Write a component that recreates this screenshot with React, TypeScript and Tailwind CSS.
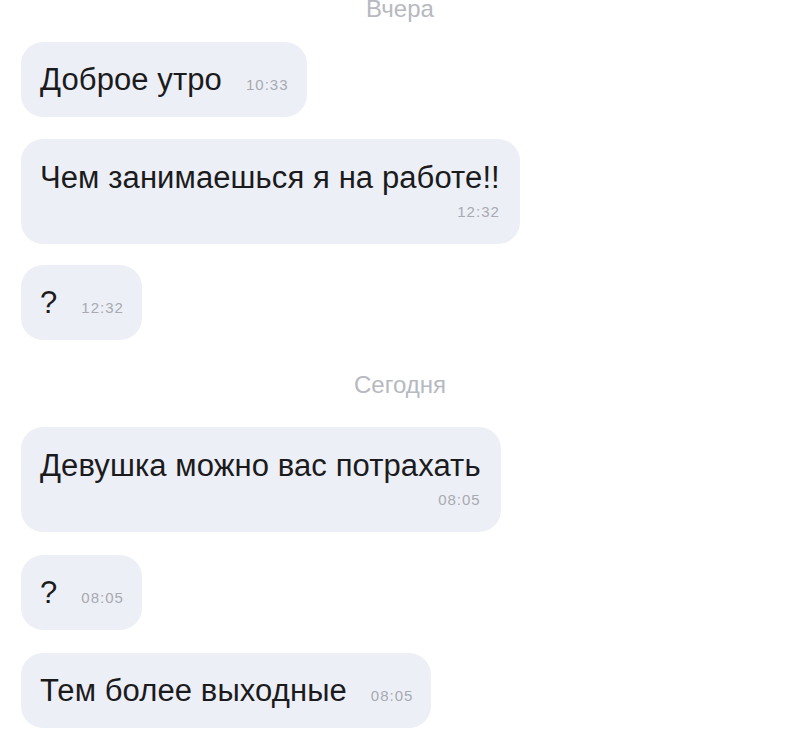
import React from "react";

const font = { fontFamily: '"Liberation Sans", Arial, sans-serif' };

function Bubble({ text, time, wrap }: { text: string; time: string; wrap?: boolean }) {
  if (wrap) {
    return (
      <div className="self-start rounded-[22px] bg-[#edeff6] pl-[19px] pr-[20px] pt-[21px] pb-[23px]">
        <div className="text-[31px] leading-[36px] tracking-[0.1px] text-[#1b1b1d]">{text}</div>
        <div className="mt-[7px] text-right text-[15px] leading-[18px] tracking-[1px] text-[#a7aab1]">{time}</div>
      </div>
    );
  }
  return (
    <div className="self-start flex items-baseline h-[75px] pt-[20px] rounded-[22px] bg-[#edeff6] pl-[19px] pr-[18px]">
      <span className="text-[31px] leading-[36px] tracking-[0.1px] text-[#1b1b1d]">{text}</span>
      <span className="ml-[24px] text-[15px] leading-[18px] tracking-[1px] text-[#a7aab1]">{time}</span>
    </div>
  );
}

function DateLabel({ children }: { children: React.ReactNode }) {
  return (
    <div className="w-full text-center text-[24px] leading-[28px] text-[#b6b9bf]">
      {children}
    </div>
  );
}

export default function App() {
  return (
    <div className="w-[800px] h-[734px] overflow-hidden bg-white" style={font}>
      <div className="flex flex-col mt-[-5px]">
        <DateLabel>Вчера</DateLabel>
        <div className="flex flex-col ml-[21px] mt-[19px]">
          <Bubble text="Доброе утро" time="10:33" />
          <div className="h-[22px]" />
          <Bubble text="Чем занимаешься я на работе!!" time="12:32" wrap />
          <div className="h-[21px]" />
          <Bubble text="?" time="12:32" />
        </div>
        <div className="mt-[31px]">
          <DateLabel>Сегодня</DateLabel>
        </div>
        <div className="flex flex-col gap-[23px] ml-[21px] mt-[28px]">
          <Bubble text="Девушка можно вас потрахать" time="08:05" wrap />
          <Bubble text="?" time="08:05" />
          <Bubble text="Тем более выходные" time="08:05" />
        </div>
      </div>
    </div>
  );
}
